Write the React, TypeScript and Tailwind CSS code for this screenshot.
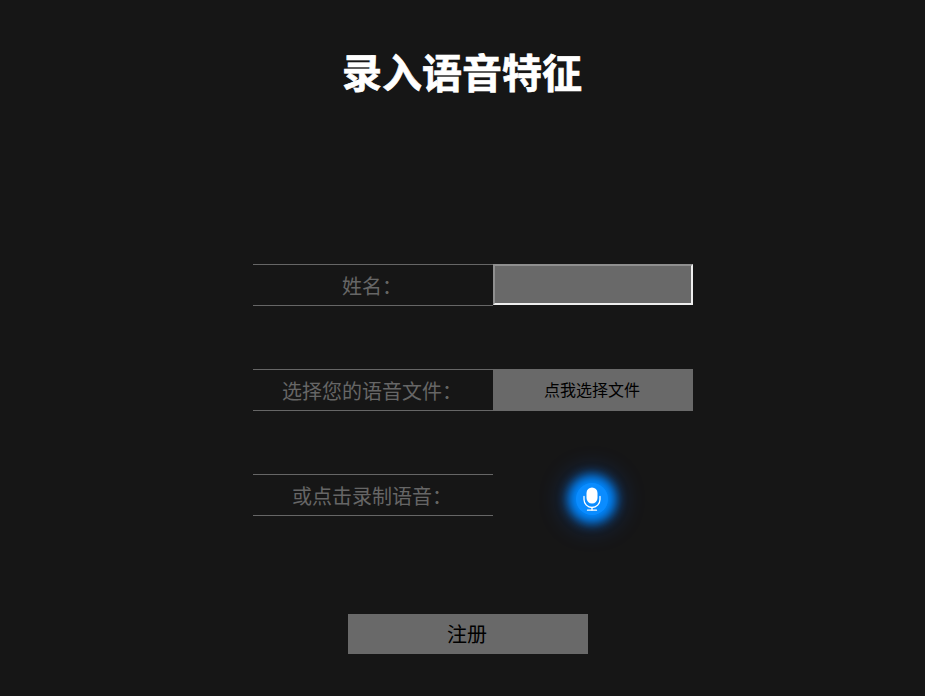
const cjk = "font-['Microsoft_YaHei','Noto_Sans_CJK_SC',sans-serif]";

function Label({ children }: { children: string }) {
    return (
        <div className="flex h-[42px] w-[240px] items-center justify-center border-y border-[#666] pr-[2px] pt-[1px] text-[20px] leading-[40px] text-[#666]">
            {children}
        </div>
    );
}

function MicIcon() {
    return (
        <svg width="18" height="24" viewBox="0 0 18 24" fill="none" stroke="white" strokeWidth="1.3" strokeLinecap="round">
            <rect x="3.5" y="0.5" width="11" height="16" rx="5.5" fill="white" stroke="none" />
            <path d="M1 9.5v3a8 8 0 0 0 16 0v-3" />
            <path d="M9 20.5v2.5" />
            <path d="M4.5 23.2h9" />
        </svg>
    );
}

export default function App() {
    return (
        <div className={`h-[696px] w-[925px] overflow-hidden bg-[#161616] ${cjk}`}>
            <h1 className="pt-[41px] pr-[1px] text-center text-[40px] leading-[60px] font-bold text-white [-webkit-text-stroke:0.7px_white]">录入语音特征</h1>

            <div className="mt-[163px] ml-[253px] flex w-[440px] flex-col gap-[63px]">
                <div className="flex">
                    <Label>姓名：</Label>
                    <input className="h-[41px] w-[200px] border-2 border-t-[#8f8f8f] border-r-[#eeeeee] border-b-[#eeeeee] border-l-[#8f8f8f] bg-[#696969] outline-none" />
                </div>
                <div className="flex">
                    <Label>选择您的语音文件：</Label>
                    <button className="h-[42px] w-[200px] bg-[#696969] pr-[2px] pb-[2px] text-[16px] text-black">点我选择文件</button>
                </div>
                <div className="flex h-[42px]">
                    <Label>或点击录制语音：</Label>
                    <div className="flex h-[50px] w-[198px] items-center justify-center">
                        <button className="flex size-[32px] items-center justify-center rounded-full bg-[#0a8cff] shadow-[0_0_11px_8px_#0088ff,0_0_26px_12px_rgba(0,100,255,0.3)]">
                            <MicIcon />
                        </button>
                    </div>
                </div>
            </div>

            <button className="mt-[98px] ml-[348px] block h-[40px] w-[240px] bg-[#696969] pr-[2px] text-[20px] text-black">注册</button>
        </div>
    );
}
